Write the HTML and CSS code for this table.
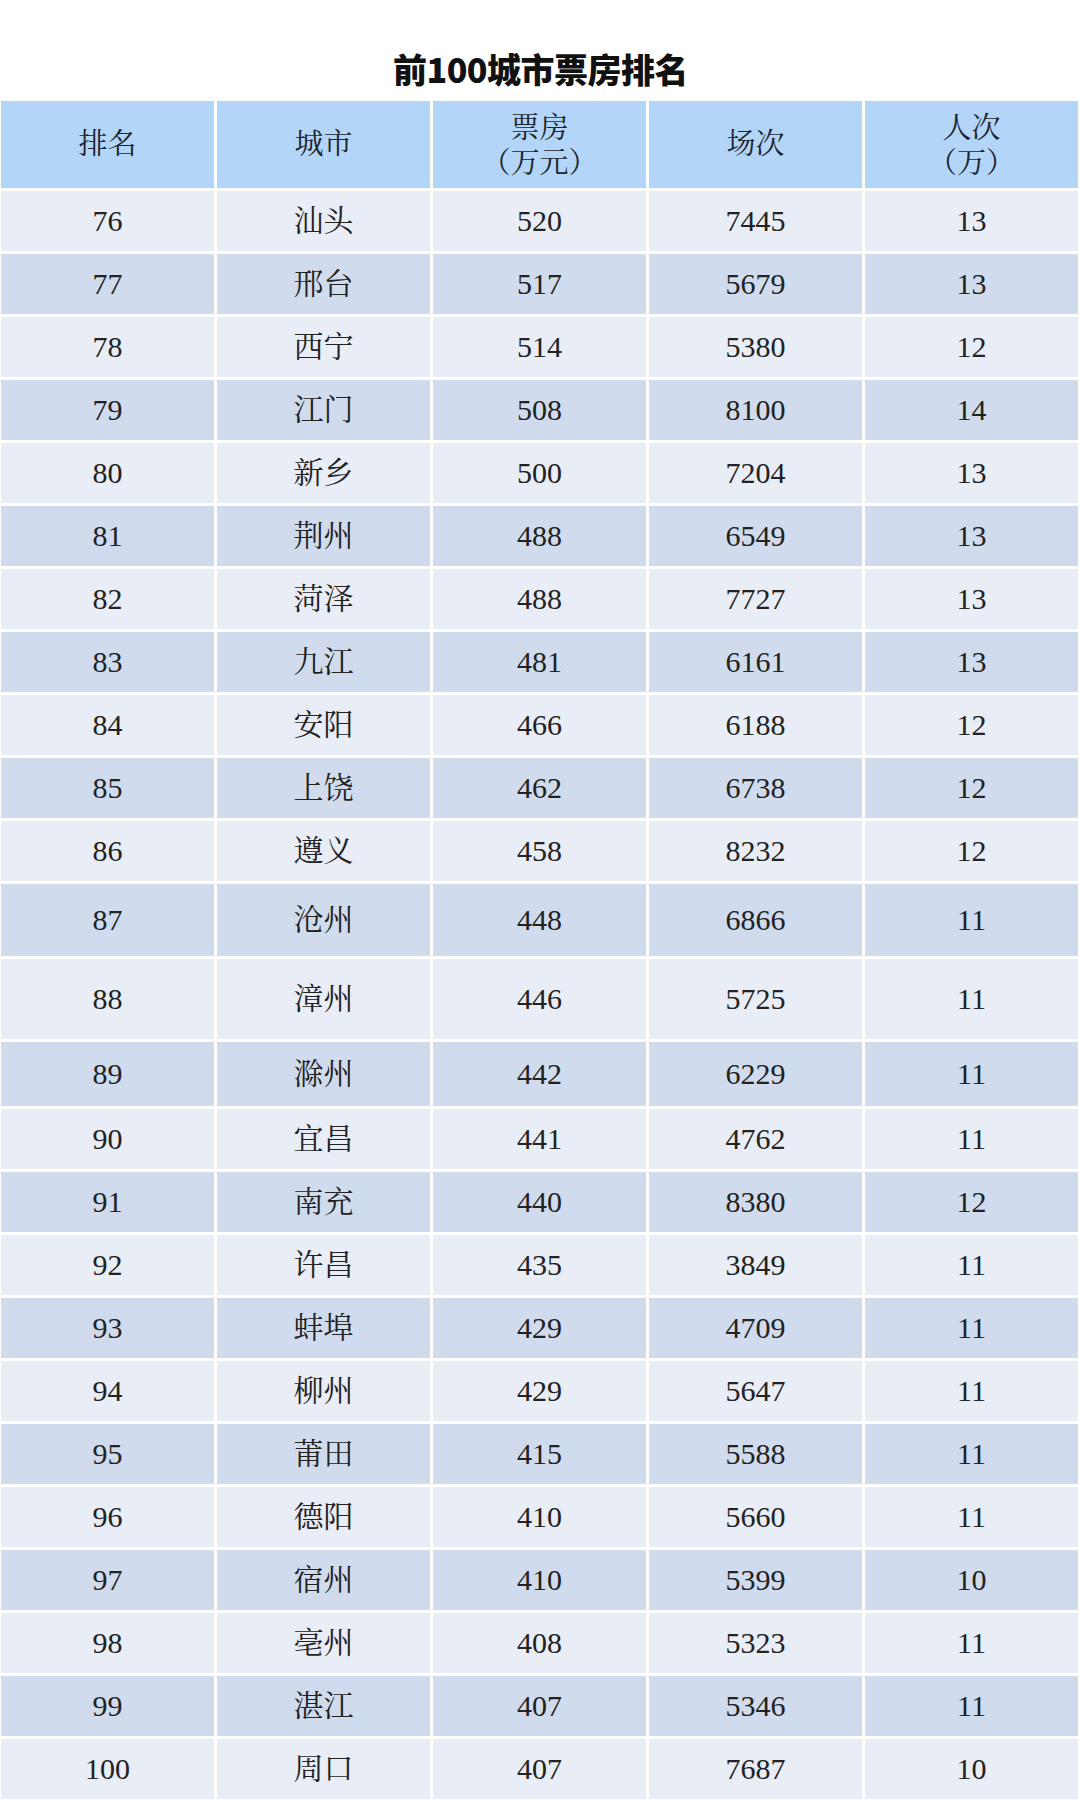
FILE: index.html
```html
<!DOCTYPE html>
<html lang="zh-CN">
<head>
<meta charset="utf-8">
<title>前100城市票房排名</title>
<link rel="stylesheet" href="styles.css">
</head>
<body>
<div class="page">
  <h1 class="title">前100城市票房排名</h1>
  <div class="table">
    <div class="row head">
      <div class="cell">排名</div>
      <div class="cell">城市</div>
      <div class="cell two">票房<br>（万元）</div>
      <div class="cell">场次</div>
      <div class="cell two">人次<br>（万）</div>
    </div>
    <div class="rows">
      <div class="row"><div class="cell">76</div><div class="cell">汕头</div><div class="cell">520</div><div class="cell">7445</div><div class="cell">13</div></div>
      <div class="row"><div class="cell">77</div><div class="cell">邢台</div><div class="cell">517</div><div class="cell">5679</div><div class="cell">13</div></div>
      <div class="row"><div class="cell">78</div><div class="cell">西宁</div><div class="cell">514</div><div class="cell">5380</div><div class="cell">12</div></div>
      <div class="row"><div class="cell">79</div><div class="cell">江门</div><div class="cell">508</div><div class="cell">8100</div><div class="cell">14</div></div>
      <div class="row"><div class="cell">80</div><div class="cell">新乡</div><div class="cell">500</div><div class="cell">7204</div><div class="cell">13</div></div>
      <div class="row"><div class="cell">81</div><div class="cell">荆州</div><div class="cell">488</div><div class="cell">6549</div><div class="cell">13</div></div>
      <div class="row"><div class="cell">82</div><div class="cell">菏泽</div><div class="cell">488</div><div class="cell">7727</div><div class="cell">13</div></div>
      <div class="row"><div class="cell">83</div><div class="cell">九江</div><div class="cell">481</div><div class="cell">6161</div><div class="cell">13</div></div>
      <div class="row"><div class="cell">84</div><div class="cell">安阳</div><div class="cell">466</div><div class="cell">6188</div><div class="cell">12</div></div>
      <div class="row"><div class="cell">85</div><div class="cell">上饶</div><div class="cell">462</div><div class="cell">6738</div><div class="cell">12</div></div>
      <div class="row"><div class="cell">86</div><div class="cell">遵义</div><div class="cell">458</div><div class="cell">8232</div><div class="cell">12</div></div>
      <div class="row tall-a"><div class="cell">87</div><div class="cell">沧州</div><div class="cell">448</div><div class="cell">6866</div><div class="cell">11</div></div>
      <div class="row tall-b"><div class="cell">88</div><div class="cell">漳州</div><div class="cell">446</div><div class="cell">5725</div><div class="cell">11</div></div>
      <div class="row tall-c"><div class="cell">89</div><div class="cell">滁州</div><div class="cell">442</div><div class="cell">6229</div><div class="cell">11</div></div>
      <div class="row"><div class="cell">90</div><div class="cell">宜昌</div><div class="cell">441</div><div class="cell">4762</div><div class="cell">11</div></div>
      <div class="row"><div class="cell">91</div><div class="cell">南充</div><div class="cell">440</div><div class="cell">8380</div><div class="cell">12</div></div>
      <div class="row"><div class="cell">92</div><div class="cell">许昌</div><div class="cell">435</div><div class="cell">3849</div><div class="cell">11</div></div>
      <div class="row"><div class="cell">93</div><div class="cell">蚌埠</div><div class="cell">429</div><div class="cell">4709</div><div class="cell">11</div></div>
      <div class="row"><div class="cell">94</div><div class="cell">柳州</div><div class="cell">429</div><div class="cell">5647</div><div class="cell">11</div></div>
      <div class="row"><div class="cell">95</div><div class="cell">莆田</div><div class="cell">415</div><div class="cell">5588</div><div class="cell">11</div></div>
      <div class="row"><div class="cell">96</div><div class="cell">德阳</div><div class="cell">410</div><div class="cell">5660</div><div class="cell">11</div></div>
      <div class="row"><div class="cell">97</div><div class="cell">宿州</div><div class="cell">410</div><div class="cell">5399</div><div class="cell">10</div></div>
      <div class="row"><div class="cell">98</div><div class="cell">亳州</div><div class="cell">408</div><div class="cell">5323</div><div class="cell">11</div></div>
      <div class="row"><div class="cell">99</div><div class="cell">湛江</div><div class="cell">407</div><div class="cell">5346</div><div class="cell">11</div></div>
      <div class="row"><div class="cell">100</div><div class="cell">周口</div><div class="cell">407</div><div class="cell">7687</div><div class="cell">10</div></div>
    </div>
  </div>
</div>
</body>
</html>
```

FILE: styles.css
```css
html, body {
  margin: 0;
  padding: 0;
  background: #ffffff;
}

.page {
  width: 1080px;
  padding-left: 1px;
  box-sizing: border-box;
}

.title {
  margin: 0;
  height: 101px;
  box-sizing: border-box;
  padding-top: 49px;
  line-height: 40px;
  font-family: "Noto Sans CJK SC", "Noto Sans", sans-serif;
  font-weight: 900;
  font-size: 34px;
  color: #111111;
  text-align: center;
  letter-spacing: -0.5px;
}

.table {
  display: flex;
  flex-direction: column;
  gap: 3px;
}

.rows {
  display: flex;
  flex-direction: column;
  gap: 3px;
}

.row {
  display: grid;
  grid-template-columns: repeat(5, 213px);
  column-gap: 3px;
  height: 60px;
}

.row.head {
  height: 87px;
}

.row.tall-a { height: 72px; }
.row.tall-b { height: 80px; }
.row.tall-c { height: 64px; }

.cell {
  display: flex;
  align-items: center;
  justify-content: center;
  text-align: center;
  font-family: "Liberation Serif", "Noto Serif CJK SC", "Noto Sans CJK SC", serif;
  font-size: 30px;
  line-height: 36px;
  color: #222222;
  background: #e9edf6;
}

.rows .row:nth-child(even) .cell {
  background: #d0dcee;
}

.head .cell {
  background: #b3d6f8;
  font-size: 29px;
  line-height: 35px;
  color: #1e2430;
}

.head .cell.two {
  padding-top: 2px;
}
```
